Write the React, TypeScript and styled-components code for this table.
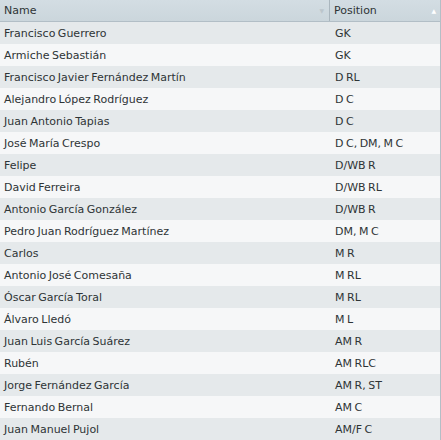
import styled, { createGlobalStyle } from "styled-components";

const GlobalStyle = createGlobalStyle`
  body {
    margin: 0;
    background: #ffffff;
    font-family: "DejaVu Sans", sans-serif;
  }
`;

const players = [
  { name: "Francisco Guerrero", position: "GK" },
  { name: "Armiche Sebastián", position: "GK" },
  { name: "Francisco Javier Fernández Martín", position: "D RL" },
  { name: "Alejandro López Rodríguez", position: "D C" },
  { name: "Juan Antonio Tapias", position: "D C" },
  { name: "José María Crespo", position: "D C, DM, M C" },
  { name: "Felipe", position: "D/WB R" },
  { name: "David Ferreira", position: "D/WB RL" },
  { name: "Antonio García González", position: "D/WB R" },
  { name: "Pedro Juan Rodríguez Martínez", position: "DM, M C" },
  { name: "Carlos", position: "M R" },
  { name: "Antonio José Comesaña", position: "M RL" },
  { name: "Óscar García Toral", position: "M RL" },
  { name: "Álvaro Lledó", position: "M L" },
  { name: "Juan Luis García Suárez", position: "AM R" },
  { name: "Rubén", position: "AM RLC" },
  { name: "Jorge Fernández García", position: "AM R, ST" },
  { name: "Fernando Bernal", position: "AM C" },
  { name: "Juan Manuel Pujol", position: "AM/F C" },
];

const Table = styled.div`
  width: 441px;
  height: 440px;
  overflow: hidden;
  display: flex;
  flex-direction: column;
  font-size: 11px;
  word-spacing: -1px;
  color: #2e3436;
  border-right: 1px solid #b4bec6;
  box-sizing: border-box;
`;

const Header = styled.div`
  display: grid;
  grid-template-columns: 330px 1fr;
  height: 22px;
  box-sizing: border-box;
  background: linear-gradient(#d3dde3, #cbd6dc);
  border-bottom: 1px solid #b2bec6;
`;

const HeaderCell = styled.div<{ divider?: boolean }>`
  display: flex;
  align-items: center;
  justify-content: space-between;
  padding: 0 4px;
  border-right: ${({ divider }) => (divider ? "1px solid #aab6be" : "none")};
  color: #2e3436;
`;

const Arrow = styled.span<{ light?: boolean }>`
  font-size: 6px;
  color: ${({ light }) => (light ? "#ffffff" : "#bcc6cc")};
  margin-right: ${({ light }) => (light ? "0" : "1px")};
`;

const Row = styled.div<{ odd: boolean }>`
  display: grid;
  grid-template-columns: 330px 1fr;
  height: 22px;
  align-items: center;
  background: ${({ odd }) => (odd ? "#e5e9eb" : "#f6f7f8")};
`;

const Cell = styled.div<{ indent?: number }>`
  padding: 0 4px 0 ${({ indent }) => indent ?? 4}px;
  white-space: nowrap;
  overflow: hidden;
`;

export default function App() {
  return (
    <>
      <GlobalStyle />
      <Table>
        <Header>
          <HeaderCell divider>
            Name
            <Arrow>▼</Arrow>
          </HeaderCell>
          <HeaderCell>
            Position
            <Arrow light>▲</Arrow>
          </HeaderCell>
        </Header>
        {players.map((p, i) => (
          <Row key={p.name} odd={i % 2 === 0}>
            <Cell>{p.name}</Cell>
            <Cell indent={5}>{p.position}</Cell>
          </Row>
        ))}
      </Table>
    </>
  );
}
